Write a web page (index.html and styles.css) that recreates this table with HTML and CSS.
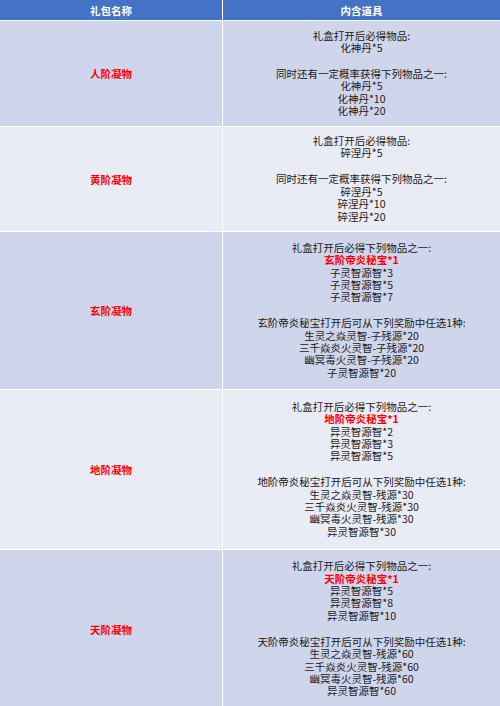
FILE: index.html
```html
<!DOCTYPE html>
<html lang="zh-CN">
<head>
<meta charset="utf-8">
<link rel="stylesheet" href="styles.css">
</head>
<body>
<div class="table">
  <div class="th">礼包名称</div>
  <div class="th">内含道具</div>

  <div class="name odd">人阶凝物</div>
  <div class="items odd">
    <div>礼盒打开后必得物品:</div>
    <div>化神丹*5</div>
    <div class="gap">同时还有一定概率获得下列物品之一:</div>
    <div>化神丹*5</div>
    <div>化神丹*10</div>
    <div>化神丹*20</div>
  </div>

  <div class="name even">黄阶凝物</div>
  <div class="items even">
    <div>礼盒打开后必得物品:</div>
    <div>碎涅丹*5</div>
    <div class="gap">同时还有一定概率获得下列物品之一:</div>
    <div>碎涅丹*5</div>
    <div>碎涅丹*10</div>
    <div>碎涅丹*20</div>
  </div>

  <div class="name odd">玄阶凝物</div>
  <div class="items odd">
    <div>礼盒打开后必得下列物品之一:</div>
    <div class="red">玄阶帝炎秘宝*1</div>
    <div>子灵智源智*3</div>
    <div>子灵智源智*5</div>
    <div>子灵智源智*7</div>
    <div class="gap">玄阶帝炎秘宝打开后可从下列奖励中任选1种:</div>
    <div>生灵之焱灵智-子残源*20</div>
    <div>三千焱炎火灵智-子残源*20</div>
    <div>幽冥毒火灵智-子残源*20</div>
    <div>子灵智源智*20</div>
  </div>

  <div class="name even">地阶凝物</div>
  <div class="items even">
    <div>礼盒打开后必得下列物品之一:</div>
    <div class="red">地阶帝炎秘宝*1</div>
    <div>异灵智源智*2</div>
    <div>异灵智源智*3</div>
    <div>异灵智源智*5</div>
    <div class="gap">地阶帝炎秘宝打开后可从下列奖励中任选1种:</div>
    <div>生灵之焱灵智-残源*30</div>
    <div>三千焱炎火灵智-残源*30</div>
    <div>幽冥毒火灵智-残源*30</div>
    <div>异灵智源智*30</div>
  </div>

  <div class="name odd">天阶凝物</div>
  <div class="items odd">
    <div>礼盒打开后必得下列物品之一:</div>
    <div class="red">天阶帝炎秘宝*1</div>
    <div>异灵智源智*5</div>
    <div>异灵智源智*8</div>
    <div>异灵智源智*10</div>
    <div class="gap">天阶帝炎秘宝打开后可从下列奖励中任选1种:</div>
    <div>生灵之焱灵智-残源*60</div>
    <div>三千焱炎火灵智-残源*60</div>
    <div>幽冥毒火灵智-残源*60</div>
    <div>异灵智源智*60</div>
  </div>
</div>
</body>
</html>
```
FILE: styles.css
```css
html, body {
  margin: 0;
  padding: 0;
  background: #ffffff;
}
body {
  width: 500px;
  height: 706px;
  overflow: hidden;
  font-family: "Noto Sans CJK SC", "Noto Sans", sans-serif;
}
.table {
  display: grid;
  grid-template-columns: 222px 277px;
  grid-template-rows: 20px 105px 104px 157px 159px 158px;
  column-gap: 1px;
  row-gap: 1px;
  background: #ffffff;
}
.th {
  background: #4472c4;
  color: #ffffff;
  font-weight: bold;
  font-size: 10.5px;
  display: flex;
  align-items: center;
  justify-content: center;
}
.odd { background: #cfd5ea; }
.even { background: #e9ebf5; }
.name {
  display: flex;
  align-items: center;
  justify-content: center;
  color: #ff0000;
  font-weight: bold;
  font-size: 10.5px;
}
.items {
  display: flex;
  flex-direction: column;
  justify-content: center;
  align-items: center;
  text-align: center;
  font-size: 10.5px;
  line-height: 12.4px;
  color: #1a1a1a;
}
.items .gap {
  margin-top: 13.5px;
}
.items .red {
  color: #ff0000;
  font-weight: bold;
}
```
